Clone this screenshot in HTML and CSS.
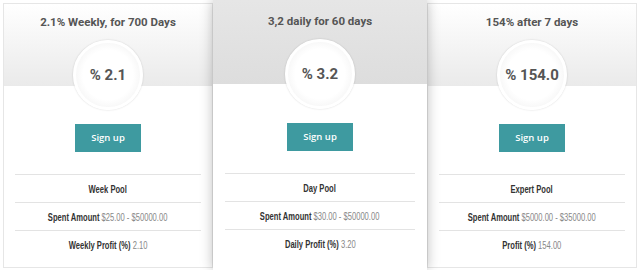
FILE: index.html
```html
<!DOCTYPE html>
<html lang="en">
<head>
  <meta charset="UTF-8" />
  <title>Investment plans</title>
  <link rel="stylesheet" href="styles.css">
</head>
<body>
  <div class="plans">

    <!-- Plan hebdo -->
    <div class="plan">
      <div class="plan-head">
        <h3>2.1% Weekly, for 700 Days</h3>
        <div class="rate">% 2.1</div>
      </div>
      <div class="plan-body">
        <a class="btn" href="#">Sign up</a>
        <ul class="details">
          <li><span><b>Week Pool</b></span></li>
          <li><span><b>Spent Amount</b> $25.00 - $50000.00</span></li>
          <li><span><b>Weekly Profit (%)</b> 2.10</span></li>
        </ul>
      </div>
    </div>

    <!-- Plan du jour (mis en avant) -->
    <div class="plan featured">
      <div class="plan-head">
        <h3>3,2 daily for 60 days</h3>
        <div class="rate">% 3.2</div>
      </div>
      <div class="plan-body">
        <a class="btn" href="#">Sign up</a>
        <ul class="details">
          <li><span><b>Day Pool</b></span></li>
          <li><span><b>Spent Amount</b> $30.00 - $50000.00</span></li>
          <li><span><b>Daily Profit (%)</b> 3.20</span></li>
        </ul>
      </div>
    </div>

    <!-- Plan expert -->
    <div class="plan">
      <div class="plan-head">
        <h3>154% after 7 days</h3>
        <div class="rate">% 154.0</div>
      </div>
      <div class="plan-body">
        <a class="btn" href="#">Sign up</a>
        <ul class="details">
          <li><span><b>Expert Pool</b></span></li>
          <li><span><b>Spent Amount</b> $5000.00 - $35000.00</span></li>
          <li><span><b>Profit (%)</b> 154.00</span></li>
        </ul>
      </div>
    </div>

  </div>
</body>
</html>
```

FILE: styles.css
```css
/* Reset */
* {
  box-sizing: border-box;
  margin: 0;
  padding: 0;
}
body {
  font-family: Roboto, "Liberation Sans", sans-serif;
  background: #fff;
  color: #555;
  overflow: hidden;
}

.plans {
  display: flex;
  align-items: flex-start;
  padding: 3px 3px 0;
}

/* Carte */
.plan {
  width: 210px;
  background: #fff;
  border: 1px solid #e6e6e6;
  text-align: center;
}
.plan-head {
  display: flex;
  flex-direction: column;
  align-items: center;
  padding-top: 10px;
  height: 82px;
  background: linear-gradient(#fff, #eaeaea);
}
.plan-head h3 {
  font-size: 11.5px;
  font-weight: 700;
  line-height: 16px;
  color: #555;
}
.rate {
  position: relative;
  z-index: 1;
  width: 70px;
  height: 70px;
  margin-top: 10px;
  border-radius: 50%;
  border: 3px solid #fff;
  background: radial-gradient(circle, #fff 55%, #f4f4f4 80%, #e4e4e4 100%);
  box-shadow: 0 0 2px rgba(0, 0, 0, 0.18);
  font-size: 15px;
  font-weight: 700;
  line-height: 64px;
  white-space: nowrap;
  color: #555;
}

.plan-body {
  padding: 38px 11px 9px;
}
.btn {
  display: inline-block;
  width: 66px;
  height: 28px;
  line-height: 28px;
  background: #3e9aa0;
  color: #fff;
  font-family: "Open Sans", sans-serif;
  font-size: 9.5px;
  font-weight: 600;
  text-decoration: none;
}

.details {
  list-style: none;
  margin-top: 22px;
  font-family: "Liberation Sans", Arial, sans-serif;
  font-size: 11px;
  color: #888;
}
.details li {
  border-top: 1px solid #e3e3e3;
  height: 28px;
  line-height: 28px;
  white-space: nowrap;
}
/* police étroite : on resserre le texte */
.details span {
  display: inline-block;
  transform: scaleX(0.69);
}
.details b {
  color: #333;
  font-weight: 700;
}

/* Carte mise en avant */
.plan.featured {
  position: relative;
  z-index: 2;
  width: 214px;
  height: 270px;
  margin-top: -3px;
  border: none;
  box-shadow: 0 0 12px rgba(0, 0, 0, 0.28);
}
.featured .plan-head {
  padding-top: 13px;
  height: 84px;
  background: linear-gradient(#e6e6e6, #dddddd);
}
.featured .plan-body {
  padding: 39px 12px 9px;
}
```
